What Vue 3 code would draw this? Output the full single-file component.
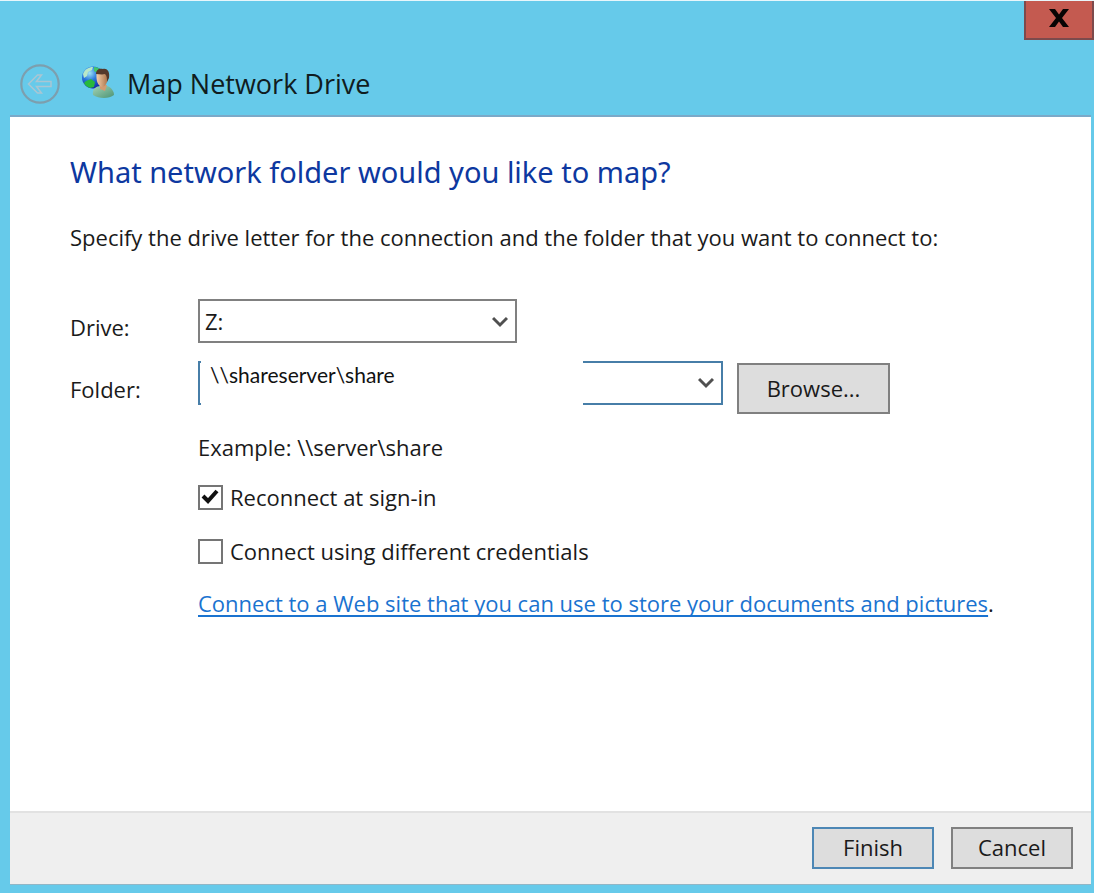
<script setup>
import { ref } from 'vue'

const drive = ref('Z:')
const folder = ref('\\\\shareserver\\share')
const reconnect = ref(true)
const otherCredentials = ref(false)
</script>

<template>
  <div class="window">
    <header class="titlebar">
      <div class="caption">
        <button class="close" type="button" aria-label="Close">
          <svg width="20" height="18" viewBox="0 0 20 18" aria-hidden="true">
            <path d="M0 0h6l4 5.5L14 0h6l-7 9 7 9h-6l-4-5.5L6 18H0l7-9z" fill="#080404" />
          </svg>
        </button>
      </div>
      <div class="heading">
        <button class="back" type="button" aria-label="Back" disabled>
          <svg width="42" height="42" viewBox="0 0 42 42" fill="none" aria-hidden="true">
            <circle cx="21" cy="21" r="18.7" stroke="#7d9fae" stroke-width="2.2" />
            <path d="M9.5 21 18.500 12h4l-5 6.500H32v5H17.500l5 6.500h-4z" stroke="#a9c6d3" stroke-width="1.500" />
          </svg>
        </button>
        <svg class="app-icon" width="34" height="34" viewBox="0 0 34 34" aria-hidden="true">
          <defs>
            <radialGradient id="globe" cx="0.35" cy="0.3" r="0.75">
              <stop offset="0" stop-color="#9fe4f5" />
              <stop offset="0.45" stop-color="#2878dc" />
              <stop offset="1" stop-color="#1424a0" />
            </radialGradient>
            <linearGradient id="face" x1="0" x2="1">
              <stop offset="0" stop-color="#f3cfaa" />
              <stop offset="1" stop-color="#a96f45" />
            </linearGradient>
            <linearGradient id="shirt" x1="0" y1="0" x2="1" y2="1">
              <stop offset="0" stop-color="#a4d3b5" />
              <stop offset="1" stop-color="#4c9474" />
            </linearGradient>
          </defs>
          <circle cx="12" cy="12.500" r="11" fill="url(#globe)" />
          <path d="M2 9C4 4 8 2 12 2l-1 3-4 2-1 4-3 2z" fill="#b8e8c8" />
          <path d="M5 16l5-2 4 3-1 5-4 1c-3-1-5-3-6-5z" fill="#28b83c" />
          <path d="M13 2c3 0 5 1 7 3l-4 3-3-2z" fill="#42c66a" />
          <path d="M12 30c-1-6 3-9 8-9h6c4 1 7 5 7 9-5 4-15 4-21 0z" fill="url(#shirt)" />
          <path d="M19 20h7l-2 6-5-2z" fill="#d39a70" />
          <path d="M15.500 9c0-5 11-5 11.500 1 0 6-2 12-6 12-4-1-6-6-5.500-13z" fill="url(#face)" />
          <path d="M15 9c0-4 3-6 7-5 5-1 7 4 6 9l-2 4c0-4 0-6-2-8-3 1-6 0-9 0z" fill="#54382a" />
        </svg>
        <span class="title">Map Network Drive</span>
      </div>
    </header>

    <main class="panel">
      <form class="content" @submit.prevent>
        <h1>What network folder would you like to map?</h1>
        <p class="intro">Specify the drive letter for the connection and the folder that you want to connect to:</p>

        <div class="fields">
          <label class="label" for="drive">Drive:</label>
          <div class="drive-box">
            <select id="drive" v-model="drive">
              <option>Z:</option>
              <option>Y:</option>
            </select>
            <svg class="chevron" width="16" height="12" viewBox="0 0 16 12" aria-hidden="true">
              <path d="M1 2l7 7 7-7" fill="none" stroke="#505050" stroke-width="3" />
            </svg>
          </div>

          <label class="label" for="folder">Folder:</label>
          <div class="folder-row">
            <div class="folder-box">
              <span class="edge"></span>
              <input id="folder" v-model="folder" type="text" />
              <button class="drop" type="button" aria-label="Recent folders">
                <svg width="16" height="12" viewBox="0 0 16 12" aria-hidden="true">
                  <path d="M1 2l7 7 7-7" fill="none" stroke="#505050" stroke-width="3" />
                </svg>
              </button>
            </div>
            <button class="btn browse" type="button">Browse...</button>
          </div>
        </div>

        <div class="options">
          <p class="example">Example: \\server\share</p>
          <label class="check"><input v-model="reconnect" type="checkbox" /><span>Reconnect at sign-in</span></label>
          <label class="check"><input v-model="otherCredentials" type="checkbox" /><span>Connect using different credentials</span></label>
          <p class="web"><a href="#">Connect to a Web site that you can use to store your documents and pictures</a>.</p>
        </div>
      </form>

      <footer class="footer">
        <button class="btn primary" type="button">Finish</button>
        <button class="btn" type="button">Cancel</button>
      </footer>
    </main>
  </div>
</template>

<style>
body {
  margin: 0;
}
</style>

<style scoped>
* {
  box-sizing: border-box;
}
.window {
  display: flex;
  flex-direction: column;
  min-height: 100vh;
  padding: 0 3px 8px 10px;
  background: #66caea;
  border-top: 1px solid #e8f6fb;
  color: #1a1a1a;
  font-family: "Open Sans", "Noto Sans", sans-serif;
  font-size: 22px;
  line-height: 30px;
}
button, input, select {
  margin: 0;
  font: inherit;
  color: inherit;
}
h1, p {
  margin: 0;
}
.caption {
  display: flex;
  justify-content: flex-end;
  margin-right: -3px;
}
.close {
  display: flex;
  align-items: center;
  justify-content: center;
  width: 70px;
  height: 39px;
  padding: 0 0 4px;
  border: 2px solid #7d4a4c;
  border-top: 0;
  background: #c45a50;
}
.heading {
  display: flex;
  align-items: center;
  height: 75px;
  padding: 12px 0 0 9px;
}
.back {
  display: flex;
  padding: 0;
  border: 0;
  background: none;
}
.app-icon {
  margin: 0 12px 4px 20px;
}
.title {
  font-size: 27px;
  color: #101c20;
}
.panel {
  flex: 1;
  display: flex;
  flex-direction: column;
  background: #fff;
  border-top: 2px solid #7ba9c8;
  border-bottom: 1px solid #91b6c6;
}
.content {
  flex: 1;
  padding: 35px 60px 24px;
}
h1 {
  font-family: "Noto Sans", "Open Sans", sans-serif;
  font-size: 29px;
  line-height: 40px;
  font-weight: 400;
  color: #0d38a0;
}
.intro {
  margin-top: 30px;
}
.fields {
  display: grid;
  grid-template-columns: 128px 1fr;
  row-gap: 18px;
  margin-top: 47px;
}
.label {
  padding-top: 13px;
}
.drive-box {
  position: relative;
  width: 319px;
  height: 44px;
}
select {
  width: 100%;
  height: 100%;
  padding: 0 36px 0 5px;
  appearance: none;
  border: 2px solid #808080;
  border-radius: 0;
  background: #fff;
}
.chevron {
  position: absolute;
  right: 9px;
  top: 17px;
  pointer-events: none;
}
.folder-row {
  display: flex;
  align-items: flex-start;
  gap: 14px;
}
.folder-box {
  display: flex;
  width: 525px;
  height: 44px;
}
.edge {
  width: 3px;
  border: 2px solid #477ea8;
  border-right: 0;
}
#folder {
  flex: 1;
  min-width: 0;
  padding: 0 9px 16px;
  border: 0;
  background: #fff;
  font-family: Lato, "Open Sans", sans-serif;
  font-size: 21px;
  line-height: 28px;
  color: #111;
}
.drop {
  display: flex;
  align-items: center;
  justify-content: flex-end;
  width: 140px;
  padding: 0 7px 0 0;
  border: 2px solid #477ea8;
  border-left: 0;
  background: #fff;
}
.btn {
  width: 122px;
  height: 42px;
  padding: 0 0 2px;
  border: 2px solid #808080;
  border-radius: 0;
  background: #ddd;
}
.browse {
  width: 153px;
  height: 51px;
  margin-top: 2px;
}
.primary {
  border-color: #4d87b5;
}
.options {
  display: flex;
  flex-direction: column;
  align-items: flex-start;
  padding-left: 128px;
  margin-top: 18px;
}
.check {
  display: flex;
  align-items: center;
  gap: 7px;
  margin-top: 20px;
}
.check + .check {
  margin-top: 24px;
}
.check input {
  display: block;
  width: 25px;
  height: 25px;
  appearance: none;
  border: 2px solid #757575;
  background: #fff;
}
.check input:checked {
  background: #fff url("data:image/svg+xml,%3Csvg xmlns='http://www.w3.org/2000/svg' viewBox='0 0 21 21'%3E%3Cpath d='M3 9l5 5L17 4' fill='none' stroke='%23111' stroke-width='4'/%3E%3C/svg%3E") center / 21px 21px no-repeat;
}
.web {
  margin-top: 22px;
}
a {
  color: #1a73d0;
  text-decoration-thickness: 2px;
  text-underline-offset: 3px;
  text-decoration-skip-ink: none;
}
.footer {
  display: flex;
  justify-content: flex-end;
  gap: 17px;
  padding: 14px 18px 15px;
  border-top: 2px solid #e2e2e2;
  background: #efefef;
}
</style>
